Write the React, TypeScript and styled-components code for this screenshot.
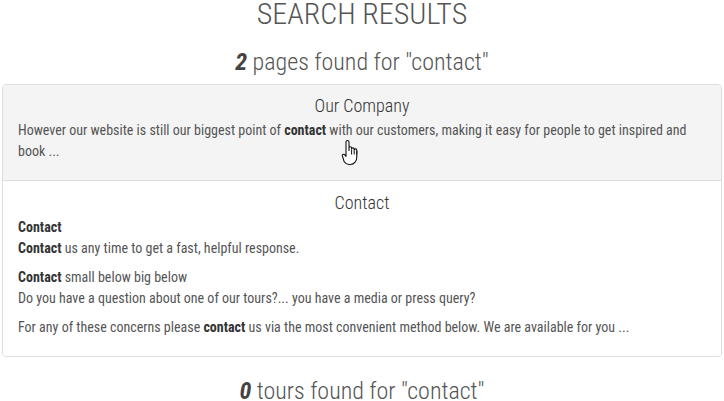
import React from "react";
import styled, { createGlobalStyle } from "styled-components";

const Global = createGlobalStyle`
  html, body { margin: 0; padding: 0; background: #fff; }
  body {
    font-family: "Roboto Condensed", Roboto, "Liberation Sans", sans-serif;
    font-stretch: 75%;
    color: #555;
  }
`;

const Page = styled.div`
  width: 724px;
  padding: 0 2px;
  box-sizing: border-box;
`;

const Title = styled.h1`
  margin: 0;
  text-align: center;
  font-weight: 300;
  font-size: 30px;
  line-height: 28px;
  color: #555;
`;

const Summary = styled.h2<{ $top: number }>`
  margin: 0;
  text-align: center;
  font-weight: 300;
  font-size: 24px;
  line-height: 28px;
  color: #555;
  padding-top: ${(p) => p.$top}px;
  b { font-weight: 700; font-style: italic; color: #444; }
`;

const List = styled.div`
  margin-top: 8px;
  border: 1px solid #ddd;
  border-radius: 4px;
  overflow: hidden;
`;

const Item = styled.div<{ $hover?: boolean }>`
  position: relative;
  padding: 10px 15px 10px 15px;
  background: ${(p) => (p.$hover ? "#f4f4f4" : "#fff")};
  & + & { border-top: 1px solid #ddd; padding-top: 11px; }
`;

const ItemTitle = styled.div`
  text-align: center;
  font-weight: 300;
  font-size: 18px;
  line-height: 22px;
  color: #333;
  margin-bottom: 3px;
`;

const Para = styled.p`
  margin: 0 0 8px;
  font-size: 14px;
  line-height: 21px;
  color: #555;
  b { font-weight: 700; color: #333; }
`;

const Cursor = styled.svg`
  position: absolute;
  left: 338px;
  top: 54px;
`;

export default function App() {
  return (
    <Page>
      <Global />
      <Title>SEARCH RESULTS</Title>
      <Summary $top={20}><b>2</b> pages found for "contact"</Summary>
      <List>
        <Item $hover>
          <ItemTitle>Our Company</ItemTitle>
          <Para>
            However our website is still our biggest point of <b>contact</b> with our customers, making it easy for people to get inspired and book ...
          </Para>
          <Cursor width="20" height="28" viewBox="0 0 20 28">
            <path
              d="M6.5 1.5c1 0 1.5.7 1.5 1.5v8.5V9c0-.8.6-1.3 1.3-1.3s1.3.5 1.3 1.3v1.2c0-.8.6-1.3 1.3-1.3s1.3.5 1.3 1.3v1c0-.8.6-1.3 1.3-1.3s1.3.5 1.3 1.3V18c0 3.7-2.4 7.5-6.5 7.5h-1.3c-2.3 0-3.7-1-4.8-2.7L1.6 17.5c-.5-.7-.3-1.6.3-2 .6-.4 1.4-.3 1.9.3L5 17.3V3c0-.8.5-1.5 1.5-1.5z"
              fill="#fff"
              stroke="#111"
              strokeWidth="1.1"
              strokeLinejoin="round"
            />
            <path d="M10.6 11v4.5M13.2 11.5v4M15.8 12v3.5" stroke="#111" strokeWidth="1" />
          </Cursor>
        </Item>
        <Item>
          <ItemTitle>Contact</ItemTitle>
          <Para>
            <b>Contact</b>
            <br />
            <b>Contact</b> us any time to get a fast, helpful response.
          </Para>
          <Para>
            <b>Contact</b> small below big below
            <br />
            Do you have a question about one of our tours?... you have a media or press query?
          </Para>
          <Para>
            For any of these concerns please <b>contact</b> us via the most convenient method below. We are available for you ...
          </Para>
        </Item>
      </List>
      <Summary $top={20}><b>0</b> tours found for "contact"</Summary>
    </Page>
  );
}
